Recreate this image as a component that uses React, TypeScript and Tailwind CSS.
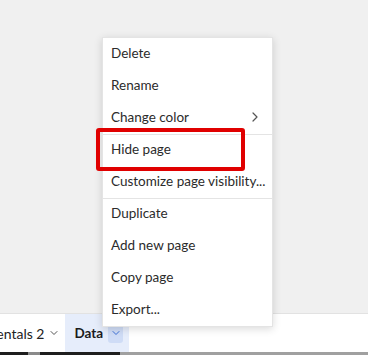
import React from "react";

const font = { fontFamily: "Lato, 'Noto Sans', sans-serif" };

function Chevron({ className }: { className?: string }) {
  return (
    <svg width="8" height="8" viewBox="0 0 8 8" className={className} fill="none">
      <path d="M1 2.5 L4 5.5 L7 2.5" stroke="currentColor" strokeWidth="1" strokeLinecap="round" strokeLinejoin="round" />
    </svg>
  );
}

type Item = { label: string; sep?: boolean; sub?: boolean };

const items: Item[] = [
  { label: "Delete" },
  { label: "Rename" },
  { label: "Change color", sub: true },
  { label: "Hide page", sep: true },
  { label: "Customize page visibility..." },
  { label: "Duplicate", sep: true },
  { label: "Add new page" },
  { label: "Copy page" },
  { label: "Export..." },
];

export default function App() {
  return (
    <div className="relative w-[368px] h-[355px] overflow-hidden flex flex-col bg-white" style={font}>
      <div className="flex-1 bg-[#f0f0f0]" />
      <div className="h-[39px] bg-white border-t border-[#e2e2e2] flex items-stretch text-[14px] text-[#222]">
        <div className="flex items-center gap-[6px] -ml-[53px] pr-[7px]">
          <span>Fundamentals 2</span>
          <Chevron className="text-[#555]" />
        </div>
        <div className="flex items-center bg-[#e6edfb] pl-[9px] pr-[6px] gap-[5px]">
          <span className="font-bold text-[13.5px] text-[#1b1b1b]">Data</span>
          <span className="w-[15px] h-[20px] rounded-[3px] bg-[#cfdcf6] flex items-center justify-center text-[#3b6fd6]">
            <Chevron />
          </span>
        </div>
      </div>
      <div className="h-[3px] flex">
        <div className="w-[28px] bg-[#1e1e1e]" />
        <div className="w-[12px] bg-[#8a8a8a]" />
        <div className="w-[80px] bg-[#1e1e1e]" />
        <div className="flex-1 bg-[#a0a0a0]" />
      </div>

      <div className="absolute left-[102px] top-[37px] w-[171px] bg-white border border-[#e4e4e4] shadow-[0_2px_8px_rgba(0,0,0,0.15)] text-[13.5px] text-[#2b2b2b]">
        {items.map((it, i) => (
          <div
            key={i}
            className={`h-[32px] flex items-center justify-between pl-[8px] pr-[14px] pb-[2px] ${it.sep ? "border-t border-[#e4e4e4]" : ""}`}
          >
            <span className="whitespace-nowrap">{it.label}</span>
            {it.sub && (
              <svg width="6" height="10" viewBox="0 0 6 10" fill="none" className="text-[#555]">
                <path d="M1 1 L5 5 L1 9" stroke="currentColor" strokeWidth="1.2" strokeLinecap="round" strokeLinejoin="round" />
              </svg>
            )}
          </div>
        ))}
      </div>

      <div className="absolute left-[96px] top-[128px] w-[149px] h-[43px] border-4 border-[#e00000] rounded-[3px]" />
    </div>
  );
}
